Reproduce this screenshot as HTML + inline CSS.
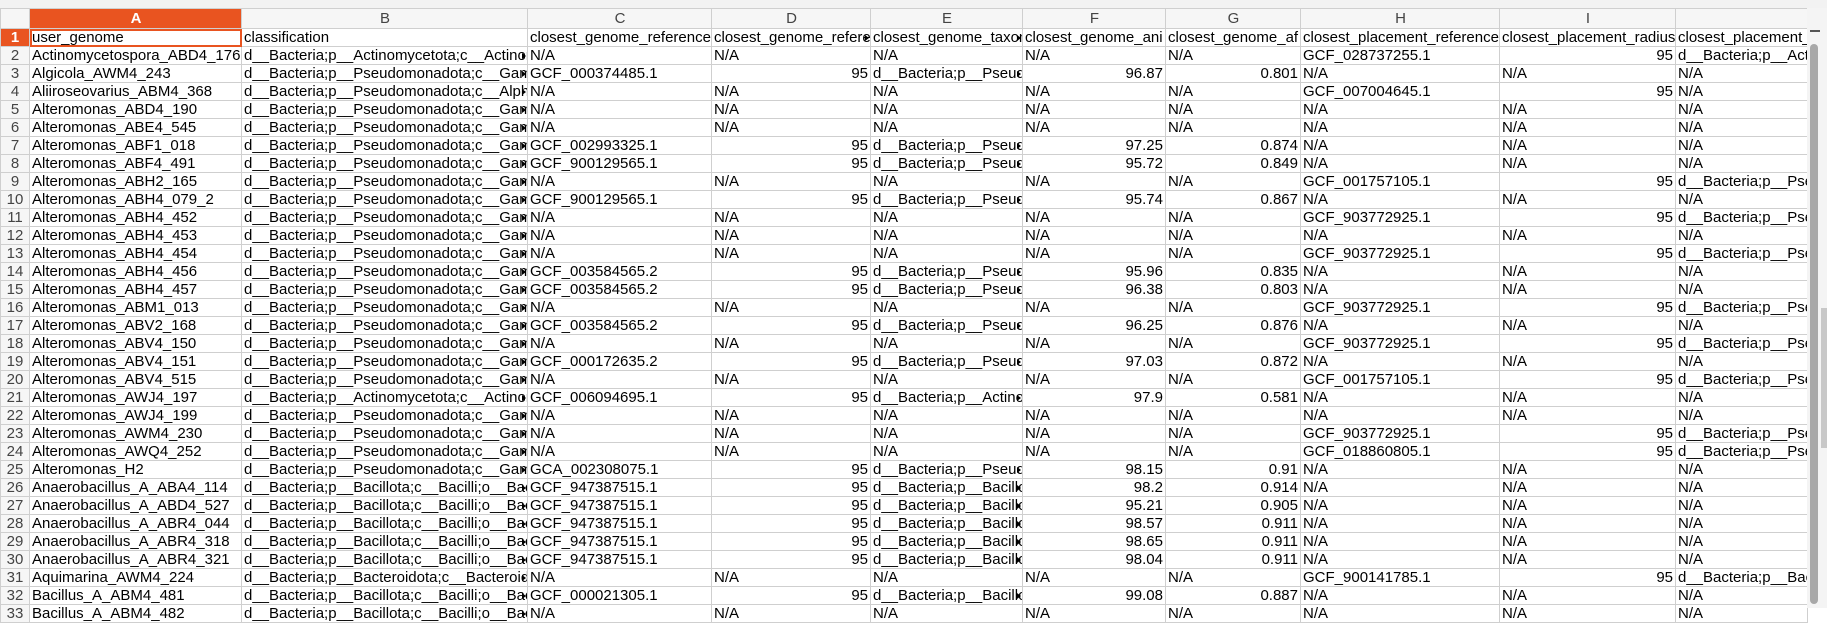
<!DOCTYPE html>
<html><head><meta charset="utf-8"><style>
html,body{margin:0;padding:0;background:#fff;width:1827px;height:608px;overflow:hidden}
body{font-family:"Liberation Sans",Arial,sans-serif;font-size:15px;color:#000}
.top{position:absolute;left:0;top:0;width:1827px;height:8px;background:#f2f2f2;border-bottom:1px solid #d0d0d0}
table{position:absolute;left:0;top:8px;border-collapse:collapse;table-layout:fixed;width:1807px}
td,th{border:1px solid #cfcfcf;padding:0 1px 0 2px;white-space:nowrap;overflow:hidden;height:17px;line-height:17px;position:relative}
th{font-weight:normal;background:#f6f6f6;color:#444;height:19px;text-align:center;font-size:15px}
th.sel{background:#e95420;color:#fff;font-weight:bold}
td.n{background:#f6f6f6;color:#444;text-align:center;padding:0}
td.n.sel{background:#e95420;color:#fff;font-weight:bold}
td.r{text-align:right;padding-right:2px}
td.t::after{content:"";position:absolute;right:1px;top:6px;border-left:4px solid #000;border-top:3px solid transparent;border-bottom:3px solid transparent}
td.a1{outline:2px solid #e95420;outline-offset:-2px}
.sb{position:absolute;left:1807px;top:8px;width:20px;height:600px;background:#f4f4f4}
.sb .th{position:absolute;left:3px;top:36px;width:8px;height:560px;background:#a8a8a8;border-radius:4px}
.sb .m{position:absolute;left:3px;top:22px;width:10px;height:2px;background:#555}
.sb .d{position:absolute;left:14px;top:300px;width:6px;height:140px;background:#c8c8c8}
</style></head><body>
<div class="top"></div>
<table>
<colgroup><col style="width:29px"><col style="width:212px"><col style="width:286px"><col style="width:184px"><col style="width:159px"><col style="width:152px"><col style="width:143px"><col style="width:135px"><col style="width:199px"><col style="width:176px"><col style="width:132px"></colgroup>
<tr><th></th><th class="sel">A</th><th>B</th><th>C</th><th>D</th><th>E</th><th>F</th><th>G</th><th>H</th><th>I</th><th></th></tr>
<tr><td class="n sel">1</td><td class="a1">user_genome</td><td>classification</td><td>closest_genome_reference</td><td class="t">closest_genome_reference_radius</td><td class="t">closest_genome_taxonomy</td><td>closest_genome_ani</td><td>closest_genome_af</td><td>closest_placement_reference</td><td>closest_placement_radius</td><td>closest_placement_taxonomy</td></tr>
<tr><td class="n">2</td><td>Actinomycetospora_ABD4_176</td><td class="t">d__Bacteria;p__Actinomycetota;c__Actinomycetes</td><td>N/A</td><td>N/A</td><td>N/A</td><td>N/A</td><td>N/A</td><td>GCF_028737255.1</td><td class="r">95</td><td>d__Bacteria;p__Actinomycetota</td></tr>
<tr><td class="n">3</td><td>Algicola_AWM4_243</td><td class="t">d__Bacteria;p__Pseudomonadota;c__Gammaproteobacteria</td><td>GCF_000374485.1</td><td class="r">95</td><td class="t">d__Bacteria;p__Pseudomonadota</td><td class="r">96.87</td><td class="r">0.801</td><td>N/A</td><td>N/A</td><td>N/A</td></tr>
<tr><td class="n">4</td><td>Aliiroseovarius_ABM4_368</td><td class="t">d__Bacteria;p__Pseudomonadota;c__Alphaproteobacteria</td><td>N/A</td><td>N/A</td><td>N/A</td><td>N/A</td><td>N/A</td><td>GCF_007004645.1</td><td class="r">95</td><td>N/A</td></tr>
<tr><td class="n">5</td><td>Alteromonas_ABD4_190</td><td class="t">d__Bacteria;p__Pseudomonadota;c__Gammaproteobacteria</td><td>N/A</td><td>N/A</td><td>N/A</td><td>N/A</td><td>N/A</td><td>N/A</td><td>N/A</td><td>N/A</td></tr>
<tr><td class="n">6</td><td>Alteromonas_ABE4_545</td><td class="t">d__Bacteria;p__Pseudomonadota;c__Gammaproteobacteria</td><td>N/A</td><td>N/A</td><td>N/A</td><td>N/A</td><td>N/A</td><td>N/A</td><td>N/A</td><td>N/A</td></tr>
<tr><td class="n">7</td><td>Alteromonas_ABF1_018</td><td class="t">d__Bacteria;p__Pseudomonadota;c__Gammaproteobacteria</td><td>GCF_002993325.1</td><td class="r">95</td><td class="t">d__Bacteria;p__Pseudomonadota</td><td class="r">97.25</td><td class="r">0.874</td><td>N/A</td><td>N/A</td><td>N/A</td></tr>
<tr><td class="n">8</td><td>Alteromonas_ABF4_491</td><td class="t">d__Bacteria;p__Pseudomonadota;c__Gammaproteobacteria</td><td>GCF_900129565.1</td><td class="r">95</td><td class="t">d__Bacteria;p__Pseudomonadota</td><td class="r">95.72</td><td class="r">0.849</td><td>N/A</td><td>N/A</td><td>N/A</td></tr>
<tr><td class="n">9</td><td>Alteromonas_ABH2_165</td><td class="t">d__Bacteria;p__Pseudomonadota;c__Gammaproteobacteria</td><td>N/A</td><td>N/A</td><td>N/A</td><td>N/A</td><td>N/A</td><td>GCF_001757105.1</td><td class="r">95</td><td>d__Bacteria;p__Pseudomonadota</td></tr>
<tr><td class="n">10</td><td>Alteromonas_ABH4_079_2</td><td class="t">d__Bacteria;p__Pseudomonadota;c__Gammaproteobacteria</td><td>GCF_900129565.1</td><td class="r">95</td><td class="t">d__Bacteria;p__Pseudomonadota</td><td class="r">95.74</td><td class="r">0.867</td><td>N/A</td><td>N/A</td><td>N/A</td></tr>
<tr><td class="n">11</td><td>Alteromonas_ABH4_452</td><td class="t">d__Bacteria;p__Pseudomonadota;c__Gammaproteobacteria</td><td>N/A</td><td>N/A</td><td>N/A</td><td>N/A</td><td>N/A</td><td>GCF_903772925.1</td><td class="r">95</td><td>d__Bacteria;p__Pseudomonadota</td></tr>
<tr><td class="n">12</td><td>Alteromonas_ABH4_453</td><td class="t">d__Bacteria;p__Pseudomonadota;c__Gammaproteobacteria</td><td>N/A</td><td>N/A</td><td>N/A</td><td>N/A</td><td>N/A</td><td>N/A</td><td>N/A</td><td>N/A</td></tr>
<tr><td class="n">13</td><td>Alteromonas_ABH4_454</td><td class="t">d__Bacteria;p__Pseudomonadota;c__Gammaproteobacteria</td><td>N/A</td><td>N/A</td><td>N/A</td><td>N/A</td><td>N/A</td><td>GCF_903772925.1</td><td class="r">95</td><td>d__Bacteria;p__Pseudomonadota</td></tr>
<tr><td class="n">14</td><td>Alteromonas_ABH4_456</td><td class="t">d__Bacteria;p__Pseudomonadota;c__Gammaproteobacteria</td><td>GCF_003584565.2</td><td class="r">95</td><td class="t">d__Bacteria;p__Pseudomonadota</td><td class="r">95.96</td><td class="r">0.835</td><td>N/A</td><td>N/A</td><td>N/A</td></tr>
<tr><td class="n">15</td><td>Alteromonas_ABH4_457</td><td class="t">d__Bacteria;p__Pseudomonadota;c__Gammaproteobacteria</td><td>GCF_003584565.2</td><td class="r">95</td><td class="t">d__Bacteria;p__Pseudomonadota</td><td class="r">96.38</td><td class="r">0.803</td><td>N/A</td><td>N/A</td><td>N/A</td></tr>
<tr><td class="n">16</td><td>Alteromonas_ABM1_013</td><td class="t">d__Bacteria;p__Pseudomonadota;c__Gammaproteobacteria</td><td>N/A</td><td>N/A</td><td>N/A</td><td>N/A</td><td>N/A</td><td>GCF_903772925.1</td><td class="r">95</td><td>d__Bacteria;p__Pseudomonadota</td></tr>
<tr><td class="n">17</td><td>Alteromonas_ABV2_168</td><td class="t">d__Bacteria;p__Pseudomonadota;c__Gammaproteobacteria</td><td>GCF_003584565.2</td><td class="r">95</td><td class="t">d__Bacteria;p__Pseudomonadota</td><td class="r">96.25</td><td class="r">0.876</td><td>N/A</td><td>N/A</td><td>N/A</td></tr>
<tr><td class="n">18</td><td>Alteromonas_ABV4_150</td><td class="t">d__Bacteria;p__Pseudomonadota;c__Gammaproteobacteria</td><td>N/A</td><td>N/A</td><td>N/A</td><td>N/A</td><td>N/A</td><td>GCF_903772925.1</td><td class="r">95</td><td>d__Bacteria;p__Pseudomonadota</td></tr>
<tr><td class="n">19</td><td>Alteromonas_ABV4_151</td><td class="t">d__Bacteria;p__Pseudomonadota;c__Gammaproteobacteria</td><td>GCF_000172635.2</td><td class="r">95</td><td class="t">d__Bacteria;p__Pseudomonadota</td><td class="r">97.03</td><td class="r">0.872</td><td>N/A</td><td>N/A</td><td>N/A</td></tr>
<tr><td class="n">20</td><td>Alteromonas_ABV4_515</td><td class="t">d__Bacteria;p__Pseudomonadota;c__Gammaproteobacteria</td><td>N/A</td><td>N/A</td><td>N/A</td><td>N/A</td><td>N/A</td><td>GCF_001757105.1</td><td class="r">95</td><td>d__Bacteria;p__Pseudomonadota</td></tr>
<tr><td class="n">21</td><td>Alteromonas_AWJ4_197</td><td class="t">d__Bacteria;p__Actinomycetota;c__Actinomycetes</td><td>GCF_006094695.1</td><td class="r">95</td><td class="t">d__Bacteria;p__Actinomycetota</td><td class="r">97.9</td><td class="r">0.581</td><td>N/A</td><td>N/A</td><td>N/A</td></tr>
<tr><td class="n">22</td><td>Alteromonas_AWJ4_199</td><td class="t">d__Bacteria;p__Pseudomonadota;c__Gammaproteobacteria</td><td>N/A</td><td>N/A</td><td>N/A</td><td>N/A</td><td>N/A</td><td>N/A</td><td>N/A</td><td>N/A</td></tr>
<tr><td class="n">23</td><td>Alteromonas_AWM4_230</td><td class="t">d__Bacteria;p__Pseudomonadota;c__Gammaproteobacteria</td><td>N/A</td><td>N/A</td><td>N/A</td><td>N/A</td><td>N/A</td><td>GCF_903772925.1</td><td class="r">95</td><td>d__Bacteria;p__Pseudomonadota</td></tr>
<tr><td class="n">24</td><td>Alteromonas_AWQ4_252</td><td class="t">d__Bacteria;p__Pseudomonadota;c__Gammaproteobacteria</td><td>N/A</td><td>N/A</td><td>N/A</td><td>N/A</td><td>N/A</td><td>GCF_018860805.1</td><td class="r">95</td><td>d__Bacteria;p__Pseudomonadota</td></tr>
<tr><td class="n">25</td><td>Alteromonas_H2</td><td class="t">d__Bacteria;p__Pseudomonadota;c__Gammaproteobacteria</td><td>GCA_002308075.1</td><td class="r">95</td><td class="t">d__Bacteria;p__Pseudomonadota</td><td class="r">98.15</td><td class="r">0.91</td><td>N/A</td><td>N/A</td><td>N/A</td></tr>
<tr><td class="n">26</td><td>Anaerobacillus_A_ABA4_114</td><td class="t">d__Bacteria;p__Bacillota;c__Bacilli;o__Bacillales</td><td>GCF_947387515.1</td><td class="r">95</td><td class="t">d__Bacteria;p__Bacillota</td><td class="r">98.2</td><td class="r">0.914</td><td>N/A</td><td>N/A</td><td>N/A</td></tr>
<tr><td class="n">27</td><td>Anaerobacillus_A_ABD4_527</td><td class="t">d__Bacteria;p__Bacillota;c__Bacilli;o__Bacillales</td><td>GCF_947387515.1</td><td class="r">95</td><td class="t">d__Bacteria;p__Bacillota</td><td class="r">95.21</td><td class="r">0.905</td><td>N/A</td><td>N/A</td><td>N/A</td></tr>
<tr><td class="n">28</td><td>Anaerobacillus_A_ABR4_044</td><td class="t">d__Bacteria;p__Bacillota;c__Bacilli;o__Bacillales</td><td>GCF_947387515.1</td><td class="r">95</td><td class="t">d__Bacteria;p__Bacillota</td><td class="r">98.57</td><td class="r">0.911</td><td>N/A</td><td>N/A</td><td>N/A</td></tr>
<tr><td class="n">29</td><td>Anaerobacillus_A_ABR4_318</td><td class="t">d__Bacteria;p__Bacillota;c__Bacilli;o__Bacillales</td><td>GCF_947387515.1</td><td class="r">95</td><td class="t">d__Bacteria;p__Bacillota</td><td class="r">98.65</td><td class="r">0.911</td><td>N/A</td><td>N/A</td><td>N/A</td></tr>
<tr><td class="n">30</td><td>Anaerobacillus_A_ABR4_321</td><td class="t">d__Bacteria;p__Bacillota;c__Bacilli;o__Bacillales</td><td>GCF_947387515.1</td><td class="r">95</td><td class="t">d__Bacteria;p__Bacillota</td><td class="r">98.04</td><td class="r">0.911</td><td>N/A</td><td>N/A</td><td>N/A</td></tr>
<tr><td class="n">31</td><td>Aquimarina_AWM4_224</td><td class="t">d__Bacteria;p__Bacteroidota;c__Bacteroidia</td><td>N/A</td><td>N/A</td><td>N/A</td><td>N/A</td><td>N/A</td><td>GCF_900141785.1</td><td class="r">95</td><td>d__Bacteria;p__Bacteroidota</td></tr>
<tr><td class="n">32</td><td>Bacillus_A_ABM4_481</td><td class="t">d__Bacteria;p__Bacillota;c__Bacilli;o__Bacillales</td><td>GCF_000021305.1</td><td class="r">95</td><td class="t">d__Bacteria;p__Bacillota</td><td class="r">99.08</td><td class="r">0.887</td><td>N/A</td><td>N/A</td><td>N/A</td></tr>
<tr><td class="n">33</td><td>Bacillus_A_ABM4_482</td><td class="t">d__Bacteria;p__Bacillota;c__Bacilli;o__Bacillales</td><td>N/A</td><td>N/A</td><td>N/A</td><td>N/A</td><td>N/A</td><td>N/A</td><td>N/A</td><td>N/A</td></tr>
</table>
<div class="sb"><div class="m"></div><div class="th"></div><div class="d"></div></div>
</body></html>
